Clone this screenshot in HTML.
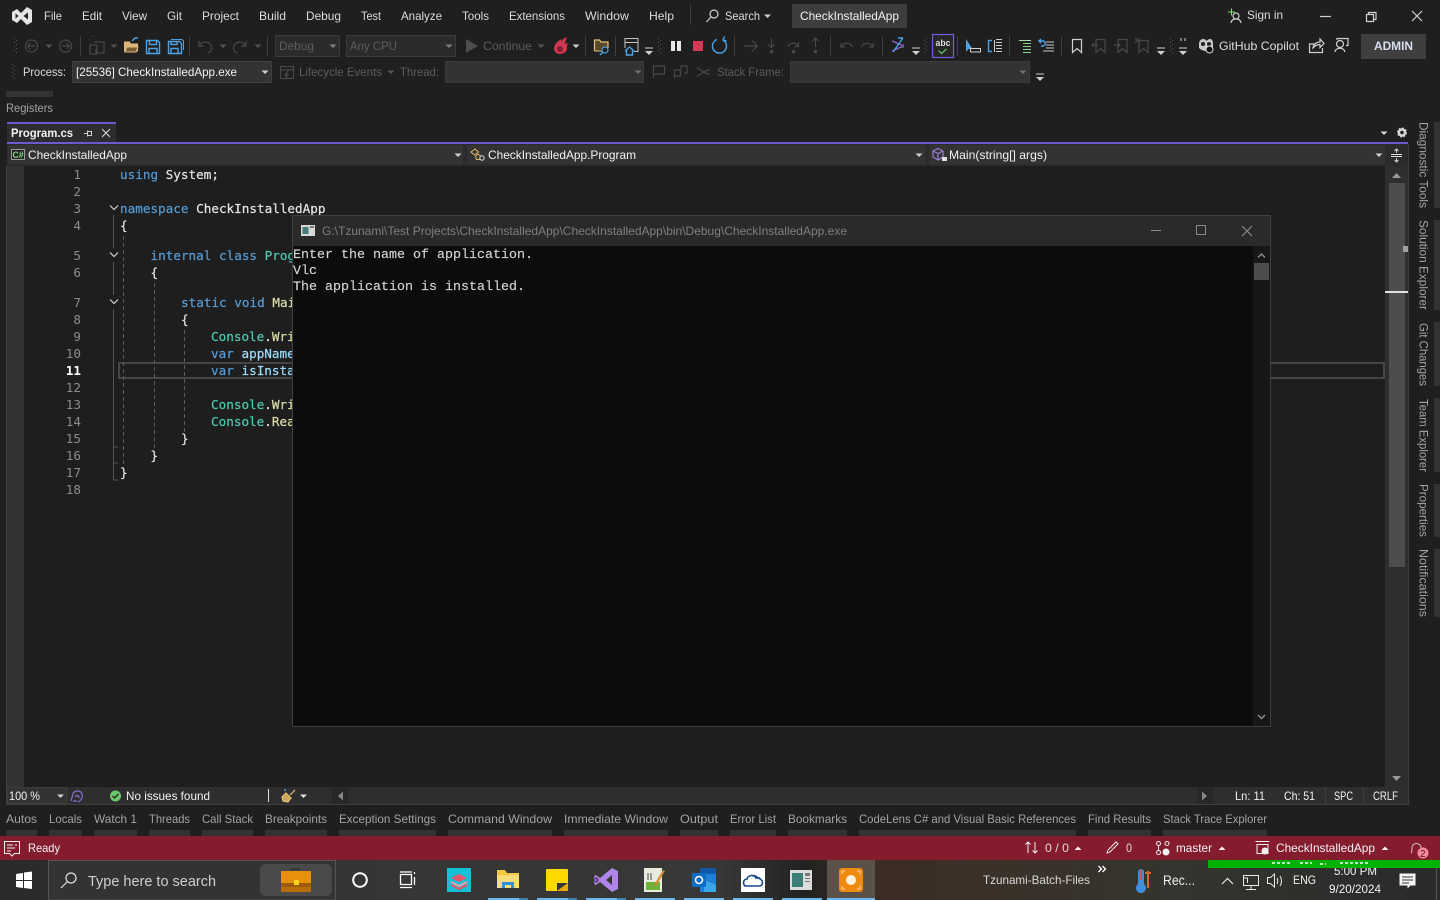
<!DOCTYPE html>
<html><head><meta charset="utf-8"><title>CheckInstalledApp</title>
<style>
html,body{margin:0;padding:0;background:#1f1f1f;width:1440px;height:900px;overflow:hidden}
svg{display:block;position:absolute;left:0;top:0}
text{font-family:"Liberation Sans",sans-serif;font-size:12px;fill:#dcdcdc;white-space:pre}
.m{fill:#dcdcdc}
.d{fill:#5c5c5c}
.g{fill:#a3a3a3}
.w{fill:#f2f2f2}
.c{font-family:"DejaVu Sans Mono",monospace;font-size:12.65px;fill:#e4e4e4;stroke:#e4e4e4;stroke-width:.2px}
.k{fill:#569cd6;stroke:#569cd6}.t{fill:#4ec9b0;stroke:#4ec9b0}.y{fill:#dcdcaa;stroke:#dcdcaa}.v{fill:#9cdcfe;stroke:#9cdcfe}
.n{font-family:"DejaVu Sans Mono",monospace;font-size:12.65px;fill:#8c8c8c;text-anchor:end}
.con{font-family:"Liberation Mono",monospace;font-size:13.33px;fill:#d4d4d4;stroke:#d4d4d4;stroke-width:.15px}
.s{fill:none;stroke:#d0d0d0;stroke-width:1.2}
.ds{fill:none;stroke:#484848;stroke-width:1.2}
.b{fill:none;stroke:#4aa3e8;stroke-width:1.4}
.sep{stroke:#3f3f3f;stroke-width:1}
.sg{stroke:#555;stroke-width:1;fill:none}
.dash{stroke:#5a5a5a;stroke-width:1;stroke-dasharray:4 3;fill:none}
</style></head><body>
<svg width="1440" height="900" viewBox="0 0 1440 900" xmlns="http://www.w3.org/2000/svg">
<defs>
<linearGradient id="tb" x1="0" x2="1" y1="0" y2="0">
<stop offset="0" stop-color="#2c2a29"/><stop offset=".24" stop-color="#353534"/><stop offset=".5" stop-color="#383836"/><stop offset=".56" stop-color="#222220"/><stop offset=".6" stop-color="#3c2c25"/><stop offset=".7" stop-color="#3a3129"/><stop offset=".82" stop-color="#33352e"/><stop offset="1" stop-color="#2a2a2a"/>
</linearGradient>
<g id="car"><path d="M-3.5 -1.5h7l-3.5 3.5z"/></g>
<g id="ovf"><path d="M-4 -4h8" stroke="#d0d0d0" fill="none"/><path d="M-4 -1h8l-4 4z" fill="#d0d0d0"/></g>
<pattern id="grip" width="4" height="4" patternUnits="userSpaceOnUse"><rect width="1" height="1" fill="#555"/><rect x="2" y="2" width="1" height="1" fill="#555"/></pattern>
</defs>
<rect width="1440" height="900" fill="#1f1f1f"/>

<!-- title bar -->
<path d="M12 12l5-3 4 4 6-6 5 3v12l-5 3-6-6-4 4-5-3z" fill="#e4e4e4"/>
<path d="M15.500 13.500l3 2.500-3 2.500zM28 12.500v7l-4.500-3.500z" fill="#1f1f1f"/>
<text x="44" y="20" textLength="18" lengthAdjust="spacingAndGlyphs">File</text>
<text x="82" y="20" textLength="20" lengthAdjust="spacingAndGlyphs">Edit</text>
<text x="122" y="20" textLength="25" lengthAdjust="spacingAndGlyphs">View</text>
<text x="167" y="20" textLength="15" lengthAdjust="spacingAndGlyphs">Git</text>
<text x="202" y="20" textLength="37" lengthAdjust="spacingAndGlyphs">Project</text>
<text x="259" y="20" textLength="27" lengthAdjust="spacingAndGlyphs">Build</text>
<text x="306" y="20" textLength="35" lengthAdjust="spacingAndGlyphs">Debug</text>
<text x="361" y="20" textLength="20" lengthAdjust="spacingAndGlyphs">Test</text>
<text x="401" y="20" textLength="41" lengthAdjust="spacingAndGlyphs">Analyze</text>
<text x="462" y="20" textLength="27" lengthAdjust="spacingAndGlyphs">Tools</text>
<text x="509" y="20" textLength="56" lengthAdjust="spacingAndGlyphs">Extensions</text>
<text x="585" y="20" textLength="44" lengthAdjust="spacingAndGlyphs">Window</text>
<text x="649" y="20" textLength="25" lengthAdjust="spacingAndGlyphs">Help</text>
<line x1="690.500" y1="5" x2="690.500" y2="25" class="sep"/>
<circle cx="714" cy="14" r="4" class="s"/><path d="M711 17l-4.500 5" class="s"/>
<text x="725" y="20" textLength="35" lengthAdjust="spacingAndGlyphs">Search</text>
<use href="#car" x="767.500" y="16" fill="#d0d0d0"/>
<rect x="792" y="4" width="115" height="24" fill="#3d3d3d"/>
<text x="800" y="20" textLength="99" lengthAdjust="spacingAndGlyphs" class="w">CheckInstalledApp</text>
<path d="M1228 12h7M1231.500 8.500v7" stroke="#7de07d" stroke-width="1.100" fill="none"/>
<circle cx="1236" cy="16" r="3" class="s"/><path d="M1231 23c.5-5.500 9.500-5.500 10 0" class="s"/>
<text x="1247" y="19" textLength="36" lengthAdjust="spacingAndGlyphs">Sign in</text>
<path d="M1320 16.500h11" class="s"/>
<path d="M1366.500 14.500h7v7h-7zM1368.500 14v-1.500h7.500v7h-2" class="s"/>
<path d="M1412 11l10 10M1422 11l-10 10" class="s"/>

<!-- toolbar row 1 -->
<rect x="13" y="37" width="4" height="17" fill="url(#grip)"/>
<circle cx="31.500" cy="46" r="6" class="ds"/><path d="M35 46h-7M30.500 43l-3 3 3 3" class="ds"/>
<use href="#car" x="49" y="46" fill="#555"/>
<circle cx="65.500" cy="46" r="6" class="ds"/><path d="M62 46h7M66.500 43l3 3-3 3" class="ds"/>
<line x1="80.500" y1="36" x2="80.500" y2="56" class="sep"/>
<path d="M94 42h10v11h-8v-4M90 40h-1M93 37v-1" class="ds"/><rect x="90" y="45" width="7" height="9" class="ds"/>
<use href="#car" x="114" y="46" fill="#555"/>
<path d="M124.500 51v-9h5l1 2h7v7z" fill="#dcb67a" stroke="#dcb67a"/><path d="M125 52l2-5h11l-2 5z" fill="#7a5f35" stroke="#dcb67a"/><path d="M132 41l3-3h3" class="b"/>
<path d="M146.500 40.500h11l2 2v11h-13zM149.500 40.500v4h7v-4M149 53.500v-5h8v5" class="b"/>
<path d="M168.500 41.500h11l2 2v10h-13zM171 41.500v3h6v-3M171 53.500v-5h7v5" class="b"/><path d="M171 39.500h11l1.500 1.500v9" stroke="#4aa3e8" fill="none"/>
<line x1="189.500" y1="36" x2="189.500" y2="56" class="sep"/>
<path d="M199 41v5h5M199.500 46c2-6 12-5 12 2 0 3-2 5-4 5" class="ds"/>
<use href="#car" x="223" y="46" fill="#555"/>
<path d="M246 41v5h-5M245.500 46c-2-6-12-5-12 2 0 3 2 5 4 5" class="ds"/>
<use href="#car" x="258" y="46" fill="#555"/>
<line x1="267.500" y1="36" x2="267.500" y2="56" class="sep"/>
<rect x="275.500" y="35.500" width="64" height="21" fill="#2b2b2b" stroke="#3a3a3a"/>
<text x="279" y="50" textLength="35" lengthAdjust="spacingAndGlyphs" class="d">Debug</text>
<use href="#car" x="333" y="46" fill="#808080"/>
<rect x="346.500" y="35.500" width="109" height="21" fill="#2b2b2b" stroke="#3a3a3a"/>
<text x="350" y="50" textLength="47" lengthAdjust="spacingAndGlyphs" class="d">Any CPU</text>
<use href="#car" x="449" y="46" fill="#808080"/>
<path d="M466 39l12 7-12 7z" fill="#4d4d4d"/>
<text x="483" y="50" textLength="49" lengthAdjust="spacingAndGlyphs" class="d">Continue</text>
<use href="#car" x="541" y="46" fill="#555"/>
<path d="M567 37c-3 1-5 3-6 5 0-1 0-2 1-3-5 2-8 6-8 10 0 3 3 5 6 5s7-2 7-6c0-2 0-3 1-5-1 0-2 1-3 1 0-2 1-5 2-7z" fill="#d0384f"/><circle cx="560" cy="49" r="3" fill="#7a2030"/>
<use href="#car" x="576" y="46" fill="#d0d0d0"/>
<line x1="585.500" y1="36" x2="585.500" y2="56" class="sep"/>
<path d="M594.500 51v-11h5l1.500 2h7v6" fill="#5a4a2a" stroke="#e5c07b" stroke-width="1.200"/><path d="M594.500 51h8" stroke="#e5c07b"/><circle cx="605" cy="50" r="3" fill="#1f1f1f" stroke="#4aa3e8" stroke-width="1.200"/><path d="M603 52l-3 3" class="b"/>
<line x1="615.500" y1="36" x2="615.500" y2="56" class="sep"/>
<path d="M625 48v-9.500h13v13h-4M625 42.500h13" stroke="#c4c4c4" fill="none"/><path d="M625 51l4.500-4 4.500 4M626.500 50v5h6v-5" class="b"/>
<use href="#ovf" x="649" y="52"/>
<rect x="658" y="37" width="4" height="17" fill="url(#grip)"/>
<rect x="671" y="41" width="4" height="10" fill="#e6e6e6"/><rect x="677" y="41" width="4" height="10" fill="#e6e6e6"/>
<rect x="693" y="41" width="10" height="10" fill="#d13a55"/>
<path d="M717 39.500a7 7 0 1 0 6 .5M724.500 36.500l-1.500 3.500 3.500 1" class="b"/>
<line x1="734.500" y1="36" x2="734.500" y2="56" class="sep"/>
<path d="M744 46h13M752 40.500l5.500 5.500-5.500 5.500" class="ds"/>
<path d="M771.500 38v9M768 44l3.500 3.500 3.500-3.500" class="ds"/><circle cx="771.500" cy="51.500" r="1.800" fill="#484848"/>
<path d="M788 47c1-5 9-5 10-1M798.500 42v4.500h-4.500" class="ds"/><circle cx="793.500" cy="51.500" r="1.800" fill="#484848"/>
<path d="M815.500 47v-9M812 41.500l3.500-3.500 3.500 3.500" class="ds"/><circle cx="815.500" cy="51.500" r="1.800" fill="#484848"/>
<line x1="830.500" y1="36" x2="830.500" y2="56" class="sep"/>
<path d="M841 43v4h4M841.500 47c2-5 9-5 11 0" class="ds"/>
<path d="M873 43v4h-4M872.500 47c-2-5-9-5-11 0" class="ds"/>
<line x1="882.500" y1="36" x2="882.500" y2="56" class="sep"/>
<path d="M892 41c4 1 8 5 12 4M892 51c4-1 8-5 12-4" stroke="#8a6fd6" stroke-width="1.300" fill="none"/><path d="M893 52l10-14M898 38l5 0" class="b"/>
<use href="#ovf" x="916" y="52"/>
<rect x="924" y="37" width="4" height="17" fill="url(#grip)"/>
<rect x="932.500" y="34.500" width="21" height="23" fill="#262626" stroke="#6f5ee0" stroke-width="1.200"/>
<text x="935.500" y="46" textLength="15" lengthAdjust="spacingAndGlyphs" style="font-size:9.500px;font-weight:bold">abc</text>
<path d="M938.500 50.500l3 3 5-4.500" stroke="#5fc26a" stroke-width="1.200" fill="none"/>
<line x1="957.500" y1="36" x2="957.500" y2="56" class="sep"/>
<path d="M966 39v13l2.500-3h4z" fill="#4aa3e8"/><rect x="970.500" y="48.500" width="10" height="3.500" fill="#1f1f1f" stroke="#d0d0d0"/>
<path d="M992 40.500h-3.500v11H992" class="b"/><path d="M994.500 40v12M996 39.500h6M996 42.500h6M996 45.500h6M996 48.500h6M996 51.500h6" stroke="#d0d0d0" fill="none"/>
<line x1="1009.500" y1="36" x2="1009.500" y2="56" class="sep"/>
<path d="M1019 40.500h12" stroke="#a8dca8"/><path d="M1023 43.500h8M1023 46.500h8M1023 49.500h8M1023 52.500h8" stroke="#8fd08f"/>
<path d="M1041 39l-2 2 2 2M1039 41h4c3 0 3 5 0 5h-2" class="b"/><path d="M1046 42h8M1046 45h8M1046 48h8M1043 51h11" stroke="#c8c8c8" fill="none"/>
<line x1="1061.500" y1="36" x2="1061.500" y2="56" class="sep"/>
<path d="M1072.500 39.500h9v13l-4.500-4-4.500 4z" class="s" stroke-width="1.400"/>
<path d="M1096 39.500h9v13l-4.500-4-4.500 4zM1098 45h-6M1094 43l-2 2 2 2" class="ds"/>
<path d="M1118 39.500h9v13l-4.500-4-4.500 4zM1114 45h6M1118 43l2 2-2 2" class="ds"/>
<path d="M1139 40.500h9v12l-4.500-4-4.500 4zM1135 38l5 5M1140 38l-5 5" class="ds"/>
<use href="#ovf" x="1161" y="52"/>
<rect x="1169" y="37" width="4" height="17" fill="url(#grip)"/>
<path d="M1181 38v3M1185 38v3" stroke="#d0d0d0"/>
<use href="#ovf" x="1183" y="52"/>
<path d="M1199 44c0-3 2-5 4-5s3 1 3.500 2c1-1 2-2 3.500-2 2 0 3 2 3 5v4c-2 2-5 3-7 3s-5-1-7-3z" fill="#c8c8c8"/><circle cx="1203" cy="44" r="2" fill="#1f1f1f"/><circle cx="1209" cy="44" r="2" fill="#1f1f1f"/><circle cx="1209.500" cy="49.500" r="3.500" fill="#111" stroke="#ddd"/>
<text x="1219" y="50" textLength="80" lengthAdjust="spacingAndGlyphs">GitHub Copilot</text>
<path d="M1315 44h-5.500v8.500h13V48M1313 48c0-3 3-6 7-6v-3l4 4.500-4 4v-3c-3 0-5 1-7 3.500z" class="s" stroke-width="1"/>
<circle cx="1340" cy="44" r="3.500" class="s" stroke-width="1"/><path d="M1335 52c.5-5 9-5 10 0M1337 40v-1.500h11v7h-2" class="s" stroke-width="1"/>
<rect x="1361" y="34" width="65" height="25" fill="#3f3f3f"/>
<text x="1374" y="50" textLength="39" lengthAdjust="spacingAndGlyphs" style="font-weight:bold;fill:#d6dfee">ADMIN</text>

<!-- toolbar row 2 -->
<rect x="12" y="63" width="4" height="17" fill="url(#grip)"/>
<text x="23" y="76" textLength="43" lengthAdjust="spacingAndGlyphs">Process:</text>
<rect x="72.500" y="61.500" width="199" height="21" fill="#333" stroke="#3f3f3f"/>
<text x="76" y="76" textLength="161" lengthAdjust="spacingAndGlyphs" class="w">[25536] CheckInstalledApp.exe</text>
<use href="#car" x="265" y="72" fill="#d0d0d0"/>
<path d="M280.500 66.500h13v12h-13zM280.500 70h13M288 71l-3 4h3l-2 3" class="ds"/>
<text x="299" y="76" textLength="83" lengthAdjust="spacingAndGlyphs" class="d">Lifecycle Events</text>
<use href="#car" x="391" y="72" fill="#555"/>
<text x="400" y="76" textLength="39" lengthAdjust="spacingAndGlyphs" class="d">Thread:</text>
<rect x="445.500" y="61.500" width="198" height="21" fill="#333" stroke="#3a3a3a"/>
<use href="#car" x="638" y="72" fill="#707070"/>
<path d="M653.500 78V66h11v8h-11" class="ds"/>
<path d="M674.500 78v-8h6v6h-6M681 69v-3h6v7h-3" class="ds"/>
<path d="M697 68c4 1 9 7 13 6M697 76c4-1 9-7 13-6" class="ds"/>
<text x="717" y="76" textLength="67" lengthAdjust="spacingAndGlyphs" class="d">Stack Frame:</text>
<rect x="790.500" y="61.500" width="239" height="21" fill="#333" stroke="#3a3a3a"/>
<use href="#car" x="1023" y="72" fill="#707070"/>
<use href="#ovf" x="1040" y="78"/>

<!-- registers -->
<rect x="6" y="91" width="47" height="6" fill="#333"/>
<text x="6" y="112" textLength="47" lengthAdjust="spacingAndGlyphs" class="g">Registers</text>

<!-- tab -->
<rect x="7" y="122" width="109" height="20" fill="#2d2d2d"/>
<rect x="7" y="122" width="109" height="2" fill="#6a5ad2"/>
<text x="11" y="137" textLength="62" lengthAdjust="spacingAndGlyphs" style="font-weight:bold;fill:#f2f2f2">Program.cs</text>
<path d="M84 133.500h3.500M87.500 130.500v6M87.500 131.500h4v4h-4" stroke="#d0d0d0" fill="none"/>
<path d="M102 129l8 8M110 129l-8 8" class="s" stroke-width="1.400"/>
<rect x="7" y="142" width="1401" height="2" fill="#6a5ad2"/>
<use href="#car" x="1384" y="133" fill="#d8d8d8"/>
<circle cx="1402" cy="132.500" r="3" fill="none" stroke="#d8d8d8" stroke-width="2.500"/><circle cx="1402" cy="132.500" r="4.500" fill="none" stroke="#d8d8d8" stroke-width="1" stroke-dasharray="2 1.500"/>

<!-- nav bar -->
<rect x="7" y="144" width="1401" height="22" fill="#2b2b2b"/>
<rect x="8" y="145" width="455" height="19" fill="#333"/>
<rect x="468" y="145" width="457" height="19" fill="#333"/>
<rect x="929" y="145" width="456" height="19" fill="#333"/>
<rect x="1386" y="145" width="22" height="19" fill="#2b2b2b"/>
<rect x="11.500" y="149.500" width="13" height="10" fill="#222" stroke="#9a9a9a"/>
<text x="12.500" y="158" textLength="11" lengthAdjust="spacingAndGlyphs" style="font-size:9.500px;font-weight:bold;fill:#86dc86">C#</text>
<text x="28" y="159" textLength="99" lengthAdjust="spacingAndGlyphs" class="w">CheckInstalledApp</text>
<use href="#car" x="458" y="155" fill="#d0d0d0"/>
<path d="M471 152l4-3 3.500 3-4 3zM478 154l3 2.500-1 3h-3.500l-1-3z" stroke="#e0b96a" fill="none"/><circle cx="482" cy="158" r="2.200" fill="#333" stroke="#ddd"/>
<text x="488" y="159" textLength="148" lengthAdjust="spacingAndGlyphs" class="w">CheckInstalledApp.Program</text>
<use href="#car" x="919" y="155" fill="#d0d0d0"/>
<path d="M933 151l5-2.500 5 2.500v6l-5 3-5-3zM933 151l5 2.500 5-2.500M938 153.500v6" stroke="#9b7fd6" fill="none" stroke-width="1.200"/><rect x="942" y="157" width="5" height="4" fill="#e0e0e0"/>
<text x="949" y="159" textLength="98" lengthAdjust="spacingAndGlyphs" class="w">Main(string[] args)</text>
<use href="#car" x="1379" y="155" fill="#d0d0d0"/>
<path d="M1391 154.500h11M1391 156.500h11" stroke="#e0e0e0"/><path d="M1396.500 149v4M1396.500 158v4M1394.500 151l2-2 2 2M1394.500 160l2 2 2-2" stroke="#d0d0d0" fill="none"/>

<!-- editor frame -->
<rect x="6" y="166" width="1" height="639" fill="#3f3f3f"/>
<rect x="7" y="166" width="17" height="621" fill="#333"/>
<rect x="24" y="166" width="1361" height="621" fill="#1e1e1e"/>
<rect x="1385" y="166" width="23" height="621" fill="#2e2e2e"/>
<rect x="1408" y="144" width="1" height="661" fill="#3f3f3f"/>
<path d="M1392 178l4.500-5 4.500 5z" fill="#999"/>
<rect x="1389" y="183" width="16" height="384" fill="#4d4d4d"/>
<rect x="1403" y="246" width="5" height="6" fill="#a0a0a0"/>
<rect x="1385" y="291" width="23" height="2" fill="#e0e0e0"/>
<path d="M1392 776l4.500 5 4.500-5z" fill="#999"/>

<!-- current line -->
<rect x="119" y="363" width="1265" height="15" fill="none" stroke="#464646" stroke-width="2"/>

<!-- outline -->
<path d="M113.500 215v33M113.500 262v33M113.500 309v171M113.500 447h5M113.500 463h5M113.500 480h5" class="sg"/>
<path d="M110 205.500l4 4 4-4M110 252.500l4 4 4-4M110 299.500l4 4 4-4" class="s" stroke-width="1"/>
<path d="M123.500 236v236M154.500 283v172M184.500 330v108" class="dash"/>

<g transform="translate(0,1)">
<!-- line numbers -->
<text class="n" x="81" y="178">1</text>
<text class="n" x="81" y="195">2</text>
<text class="n" x="81" y="212">3</text>
<text class="n" x="81" y="229">4</text>
<text class="n" x="81" y="259">5</text>
<text class="n" x="81" y="276">6</text>
<text class="n" x="81" y="306">7</text>
<text class="n" x="81" y="323">8</text>
<text class="n" x="81" y="340">9</text>
<text class="n" x="81" y="357">10</text>
<text class="n" x="81" y="374" style="fill:#fff;font-weight:bold">11</text>
<text class="n" x="81" y="391">12</text>
<text class="n" x="81" y="408">13</text>
<text class="n" x="81" y="425">14</text>
<text class="n" x="81" y="442">15</text>
<text class="n" x="81" y="459">16</text>
<text class="n" x="81" y="476">17</text>
<text class="n" x="81" y="493">18</text>

<!-- code -->
<text class="c" x="120" y="178"><tspan class="k">using</tspan> System;</text>
<text class="c" x="120" y="212"><tspan class="k">namespace</tspan> CheckInstalledApp</text>
<text class="c" x="120" y="229">{</text>
<text class="c" x="150.500" y="259"><tspan class="k">internal class</tspan> <tspan class="t">Program</tspan></text>
<text class="c" x="150.500" y="276">{</text>
<text class="c" x="181" y="306"><tspan class="k">static void</tspan> <tspan class="y">Main</tspan></text>
<text class="c" x="181" y="323">{</text>
<text class="c" x="211" y="340"><tspan class="t">Console</tspan>.<tspan class="y">WriteLine</tspan></text>
<text class="c" x="211" y="357"><tspan class="k">var</tspan> <tspan class="v">appName</tspan></text>
<text class="c" x="211" y="374"><tspan class="k">var</tspan> <tspan class="v">isInstalled</tspan></text>
<text class="c" x="211" y="408"><tspan class="t">Console</tspan>.<tspan class="y">WriteLine</tspan></text>
<text class="c" x="211" y="425"><tspan class="t">Console</tspan>.<tspan class="y">ReadLine</tspan></text>
<text class="c" x="181" y="442">}</text>
<text class="c" x="150.500" y="459">}</text>
<text class="c" x="120" y="476">}</text>
</g>

<!-- console window -->
<rect x="292.500" y="215.500" width="978" height="511" fill="#0c0c0c" stroke="#404040"/>
<rect x="293" y="216" width="977" height="30" fill="#2a2a2a"/>
<rect x="301" y="225" width="14" height="11" fill="#d8d8d8"/><rect x="302.500" y="227" width="6" height="7" fill="#4a7a7a"/><rect x="310" y="226" width="4" height="2" fill="#777"/>
<text x="322" y="235" textLength="525" lengthAdjust="spacingAndGlyphs" style="fill:#7f7f7f">G:\Tzunami\Test Projects\CheckInstalledApp\CheckInstalledApp\bin\Debug\CheckInstalledApp.exe</text>
<path d="M1151 230.500h10" stroke="#8a8a8a" fill="none"/>
<rect x="1196.500" y="225.500" width="9" height="9" fill="none" stroke="#8a8a8a"/>
<path d="M1242 226l10 10M1252 226l-10 10" stroke="#8a8a8a" stroke-width="1.200" fill="none"/>
<rect x="1253" y="246" width="17" height="480" fill="#171717"/>
<rect x="1254" y="263" width="15" height="17" fill="#4d4d4d"/>
<path d="M1258 257.500l3.500-3.500 3.500 3.500M1258 715l3.500 3.500 3.500-3.500" stroke="#8f8f8f" stroke-width="1.400" fill="none"/>
<text class="con" x="293" y="258">Enter the name of application.</text>
<text class="con" x="293" y="274">Vlc</text>
<text class="con" x="293" y="290">The application is installed.</text>

<!-- vertical side tabs -->
<g fill="#333"><rect x="1434" y="122" width="6" height="86"/><rect x="1434" y="220" width="6" height="90"/><rect x="1434" y="322" width="6" height="64"/><rect x="1434" y="398" width="6" height="74"/><rect x="1434" y="484" width="6" height="53"/><rect x="1434" y="549" width="6" height="68"/></g>
<text transform="translate(1419.500,122) rotate(90)" textLength="86" lengthAdjust="spacingAndGlyphs" class="g" x="0" y="0">Diagnostic Tools</text>
<text transform="translate(1419.500,220) rotate(90)" textLength="90" lengthAdjust="spacingAndGlyphs" class="g" x="0" y="0">Solution Explorer</text>
<text transform="translate(1419.500,323) rotate(90)" textLength="63" lengthAdjust="spacingAndGlyphs" class="g" x="0" y="0">Git Changes</text>
<text transform="translate(1419.500,399) rotate(90)" textLength="73" lengthAdjust="spacingAndGlyphs" class="g" x="0" y="0">Team Explorer</text>
<text transform="translate(1419.500,484) rotate(90)" textLength="53" lengthAdjust="spacingAndGlyphs" class="g" x="0" y="0">Properties</text>
<text transform="translate(1419.500,549) rotate(90)" textLength="68" lengthAdjust="spacingAndGlyphs" class="g" x="0" y="0">Notifications</text>

<!-- editor status row -->
<rect x="7" y="787" width="1401" height="17" fill="#2e2e2e"/>
<rect x="6" y="804" width="1403" height="1" fill="#3f3f3f"/>
<rect x="7.500" y="787.500" width="59" height="16" fill="#333" stroke="#3c3c3c"/>
<text x="9" y="800" textLength="31" lengthAdjust="spacingAndGlyphs" class="w">100 %</text>
<use href="#car" x="60.500" y="796" fill="#d0d0d0"/>
<path d="M71 801l2-7c1-4 8-4 9 0 1 3-1 7-4 8M75 797c1-2 4-2 4 1M73 801h4" stroke="#8a6fd6" fill="none" stroke-width="1.200"/>
<circle cx="115.500" cy="796" r="5.500" fill="#6cc76c"/><path d="M112.500 796l2 2 4-4" stroke="#1f1f1f" stroke-width="1.300" fill="none"/>
<text x="126" y="800" textLength="84" lengthAdjust="spacingAndGlyphs" class="w">No issues found</text>
<rect x="268" y="789" width="1" height="13" fill="#ddd"/>
<path d="M295 790l-5 5M286 793l5 5-3 4-5-1-1-4z" stroke="#e5c07b" fill="#c9a65a" stroke-width="1.200"/><circle cx="285" cy="790" r="1" fill="#4aa3e8"/>
<use href="#car" x="303.500" y="796" fill="#e0e0e0"/>
<rect x="332" y="787" width="16" height="17" fill="#272727"/>
<path d="M343 791.500v9l-5-4.500z" fill="#888"/>
<rect x="1197" y="787" width="16" height="17" fill="#272727"/>
<path d="M1202 791.500v9l5-4.500z" fill="#888"/>
<text x="1235" y="800" textLength="30" lengthAdjust="spacingAndGlyphs" class="w">Ln: 11</text>
<text x="1284" y="800" textLength="31" lengthAdjust="spacingAndGlyphs" class="w">Ch: 51</text>
<rect x="1325" y="787" width="1" height="17" fill="#3f3f3f"/><rect x="1363" y="787" width="1" height="17" fill="#3f3f3f"/>
<text x="1334" y="800" textLength="19" lengthAdjust="spacingAndGlyphs" class="w">SPC</text>
<text x="1373" y="800" textLength="25" lengthAdjust="spacingAndGlyphs" class="w">CRLF</text>

<!-- bottom tabs -->
<g fill="#333">
<rect x="6" y="830" width="31" height="6"/><rect x="49" y="830" width="33" height="6"/><rect x="94" y="830" width="43" height="6"/><rect x="149" y="830" width="41" height="6"/><rect x="202" y="830" width="51" height="6"/><rect x="265" y="830" width="62" height="6"/><rect x="339" y="830" width="97" height="6"/><rect x="448" y="830" width="104" height="6"/><rect x="564" y="830" width="104" height="6"/><rect x="680" y="830" width="38" height="6"/><rect x="730" y="830" width="46" height="6"/><rect x="788" y="830" width="59" height="6"/><rect x="859" y="830" width="217" height="6"/><rect x="1088" y="830" width="63" height="6"/><rect x="1163" y="830" width="104" height="6"/>
</g>
<text x="6" y="823" textLength="31" lengthAdjust="spacingAndGlyphs" class="g">Autos</text>
<text x="49" y="823" textLength="33" lengthAdjust="spacingAndGlyphs" class="g">Locals</text>
<text x="94" y="823" textLength="43" lengthAdjust="spacingAndGlyphs" class="g">Watch 1</text>
<text x="149" y="823" textLength="41" lengthAdjust="spacingAndGlyphs" class="g">Threads</text>
<text x="202" y="823" textLength="51" lengthAdjust="spacingAndGlyphs" class="g">Call Stack</text>
<text x="265" y="823" textLength="62" lengthAdjust="spacingAndGlyphs" class="g">Breakpoints</text>
<text x="339" y="823" textLength="97" lengthAdjust="spacingAndGlyphs" class="g">Exception Settings</text>
<text x="448" y="823" textLength="104" lengthAdjust="spacingAndGlyphs" class="g">Command Window</text>
<text x="564" y="823" textLength="104" lengthAdjust="spacingAndGlyphs" class="g">Immediate Window</text>
<text x="680" y="823" textLength="38" lengthAdjust="spacingAndGlyphs" class="g">Output</text>
<text x="730" y="823" textLength="46" lengthAdjust="spacingAndGlyphs" class="g">Error List</text>
<text x="788" y="823" textLength="59" lengthAdjust="spacingAndGlyphs" class="g">Bookmarks</text>
<text x="859" y="823" textLength="217" lengthAdjust="spacingAndGlyphs" class="g">CodeLens C# and Visual Basic References</text>
<text x="1088" y="823" textLength="63" lengthAdjust="spacingAndGlyphs" class="g">Find Results</text>
<text x="1163" y="823" textLength="104" lengthAdjust="spacingAndGlyphs" class="g">Stack Trace Explorer</text>

<!-- status bar -->
<rect x="0" y="836" width="1440" height="24" fill="#841c2e"/>
<path d="M4.500 841.500h15v12h-5l-2.500 2.500-2.500-2.500h-5z" fill="none" stroke="#f0f0f0"/><path d="M7 845h6M7 848h8M15 845h2M7 851h4" stroke="#f0f0f0" fill="none"/>
<text x="28" y="852" textLength="32" lengthAdjust="spacingAndGlyphs" class="w">Ready</text>
<path d="M1028 853v-11M1025.500 844.500l2.500-2.500 2.500 2.500M1035 842v11M1032.500 850.500l2.500 2.500 2.500-2.500" stroke="#f0f0f0" fill="none"/>
<text x="1045" y="852" textLength="24" lengthAdjust="spacingAndGlyphs" class="m">0 / 0</text>
<path d="M1074.500 850l3.500-3.500 3.500 3.500z" fill="#f0f0f0"/>
<path d="M1107 853l1-3 8-8 2 2-8 8z" fill="none" stroke="#f0f0f0"/>
<text x="1126" y="852" textLength="6" lengthAdjust="spacingAndGlyphs" class="m">0</text>
<circle cx="1158.500" cy="843.500" r="2" fill="none" stroke="#f0f0f0"/><circle cx="1167" cy="843.500" r="2" fill="none" stroke="#f0f0f0"/><circle cx="1158.500" cy="852.500" r="2" fill="none" stroke="#f0f0f0"/><path d="M1158.500 846v4" stroke="#f0f0f0"/><circle cx="1166" cy="852" r="3.500" fill="#f0f0f0"/>
<text x="1176" y="852" textLength="36" lengthAdjust="spacingAndGlyphs" class="w">master</text>
<path d="M1218.500 850l3.500-3.500 3.500 3.500z" fill="#f0f0f0"/>
<path d="M1255.500 841.500h14M1257 844.500h11v9h-11z" fill="none" stroke="#f0f0f0"/><circle cx="1265" cy="851" r="3.500" fill="#f0f0f0"/>
<text x="1276" y="852" textLength="99" lengthAdjust="spacingAndGlyphs" class="w">CheckInstalledApp</text>
<path d="M1381.500 850l3.500-3.500 3.500 3.500z" fill="#f0f0f0"/>
<path d="M1411 853c1-1 1-3 1-5 0-6 9-6 9 0" fill="none" stroke="#e0c0c0"/>
<circle cx="1423" cy="853" r="5.500" fill="#f28b9a"/>
<text x="1420" y="857" style="font-size:10px;fill:#5a1020">2</text>

<!-- taskbar -->
<rect x="0" y="860" width="1440" height="40" fill="url(#tb)"/>
<path d="M16 874l7-1v7h-7zM24 872.500l8-1v8.500h-8zM16 881h7v7l-7-1zM24 881h8v8l-8-1z" fill="#fff"/>
<rect x="48.500" y="860.500" width="287" height="39.500" fill="#333" stroke="#565656"/>
<circle cx="71" cy="878" r="5" fill="none" stroke="#e0e0e0" stroke-width="1.200"/><path d="M67 882l-6 6" stroke="#e0e0e0" stroke-width="1.200"/>
<text x="88" y="886" textLength="128" lengthAdjust="spacingAndGlyphs" style="font-size:15px;fill:#cfcfcf">Type here to search</text>
<rect x="260" y="864" width="72" height="32" rx="6" fill="#4a4a4a"/>
<path d="M292 872v-3h7v3" fill="none" stroke="#333" stroke-width="1.500"/>
<rect x="281" y="871" width="30" height="21" fill="#e88f0c"/><rect x="281" y="883" width="30" height="4" fill="#9c5b08"/><rect x="281" y="887" width="30" height="5" fill="#b86f08"/><rect x="294" y="880" width="5" height="5" fill="#f7d31a"/>
<circle cx="360" cy="880" r="6.800" fill="none" stroke="#fff" stroke-width="2"/>
<path d="M400.500 874.500h11v10h-11zM400 872h12M400 887.500h12M414.500 872v2M414.500 877v8" stroke="#fff" fill="none" stroke-width="1.300"/>
<rect x="447" y="868" width="24" height="24" fill="#14c0d6"/><path d="M451 878l8-4 8 4-8 4z" fill="#e8556a"/><path d="M451 882l8 4 8-4" fill="none" stroke="#f0a0a8" stroke-width="2"/><path d="M451 885l8 4 8-4" fill="none" stroke="#e8556a" stroke-width="2"/>
<path d="M497 870h8l2 3h12v15h-22z" fill="#f5c842"/><path d="M497 875h22v13h-22z" fill="#fbdc7a"/><rect x="502" y="882" width="12" height="6" fill="#2f8fd8"/><rect x="505" y="885" width="6" height="3" fill="#fbdc7a"/>
<rect x="546" y="869" width="22" height="22" rx="1" fill="#ffd800"/><path d="M557 891v-8h11z" fill="#333"/><path d="M557 891l11-8v8z" fill="#e8a80c"/>
<path d="M612 868l6 3v18l-6 3-12-10-4 3-2-1v-8l2-1 4 3z" fill="#b084e8"/><path d="M612 875v10l-6-5z" fill="#383838"/><path d="M596 876.500v7l3-3.500z" fill="#383838"/><path d="M594 876l4 4-4 4z" fill="#7d57c4"/>
<rect x="644" y="868" width="18" height="24" fill="#e8ecdf"/><rect x="646" y="882" width="14" height="8" fill="#6fb23a"/><path d="M648 873v7M651 873v7" stroke="#444"/><path d="M654 885l9-15 2 1-9 15z" fill="#d88a2a"/>
<rect x="700" y="868" width="16" height="24" fill="#1f7fd6"/><path d="M700 868h16v6h-16z" fill="#0f5aa8"/><path d="M704 880l12 5v7h-12z" fill="#38a6e8"/><rect x="692" y="873" width="14" height="14" fill="#0f6cc4"/><circle cx="699" cy="880" r="3.500" fill="none" stroke="#fff" stroke-width="1.500"/>
<rect x="741" y="868" width="24" height="24" fill="#fff"/><path d="M745 886c-3-3-1-7 2-7 1-4 7-5 9-1 2-1 4 0 4 1 3 1 4 7-1 7zM752 876c2-1 5 0 6 3" fill="none" stroke="#1a4a8a" stroke-width="1.600"/>
<rect x="790" y="870" width="22" height="20" fill="#dcdcdc"/><rect x="792" y="873" width="11" height="14" fill="#3f7d78"/><rect x="805" y="873" width="5" height="3" fill="#777"/><rect x="805" y="878" width="5" height="1" fill="#777"/><rect x="805" y="881" width="5" height="1" fill="#777"/>
<rect x="827" y="860" width="48" height="40" fill="#5a5248"/>
<rect x="839" y="868" width="24" height="24" rx="3" fill="#ef8a12"/><circle cx="851" cy="880" r="5" fill="#fff2df"/><path d="M842 874v-3h3M860 874v-3h-3M842 886v3h3M860 886v3h-3" stroke="#ffd9a8" fill="none"/>
<g fill="#6cb6f0"><rect x="488" y="898" width="31" height="2"/><rect x="537" y="898" width="31" height="2"/><rect x="586" y="898" width="31" height="2"/><rect x="635" y="898" width="40" height="2"/><rect x="684" y="898" width="40" height="2"/><rect x="733" y="898" width="40" height="2"/><rect x="782" y="898" width="40" height="2"/><rect x="827" y="898" width="48" height="2"/></g>
<g fill="#3f7fa8"><rect x="519" y="898" width="9" height="2"/><rect x="568" y="898" width="9" height="2"/><rect x="617" y="898" width="9" height="2"/></g>
<text x="983" y="884" textLength="107" lengthAdjust="spacingAndGlyphs" style="fill:#d8d8d8">Tzunami-Batch-Files</text>
<path d="M1098.500 866l3 3-3 3M1102.500 866l3 3-3 3" stroke="#fff" stroke-width="1.300" fill="none"/>
<path d="M1138 872a3 3 0 0 1 6 0v12a5 5 0 1 1-6 0z" fill="#3f8fe0"/><rect x="1140" y="870" width="2" height="10" fill="#d05050"/>
<path d="M1148 871v17M1145 873h6" stroke="#d06a30" stroke-width="2" fill="none"/>
<text x="1163" y="885" textLength="32" lengthAdjust="spacingAndGlyphs" style="font-size:14px;fill:#f0f0f0">Rec...</text>
<path d="M1222 884l5.500-5.500 5.500 5.500" stroke="#e8e8e8" stroke-width="1.200" fill="none"/>
<path d="M1243.500 875.500h15v10h-15zM1251 885.500v4M1246 889.500h10M1243.500 878h4v5" stroke="#e8e8e8" fill="none"/>
<path d="M1267.500 877.500h3l4-3.500v13l-4-3.500h-3zM1277 878c1 2 1 4 0 6M1280 876c2 3 2 7 0 10" stroke="#e8e8e8" fill="none"/>
<text x="1293" y="884" textLength="23" lengthAdjust="spacingAndGlyphs" class="w">ENG</text>
<text x="1334" y="875" textLength="43" lengthAdjust="spacingAndGlyphs" class="w">5:00 PM</text>
<text x="1329" y="893" textLength="52" lengthAdjust="spacingAndGlyphs" class="w">9/20/2024</text>
<path d="M1399.500 873.500h16v12h-5l-3 3v-3h-8z" fill="#f4f4f4"/><path d="M1402 877h11M1402 880h11M1402 883h7" stroke="#333"/>
<rect x="1436" y="860" width="1" height="40" fill="#555"/>
<rect x="1208" y="860" width="232" height="8" fill="#00b300"/>
<path d="M1272 863h20M1300 863h12M1320 864h6M1340 863h28" stroke="#bfe8bf" stroke-width="2" stroke-dasharray="3 2"/>
</svg>
</body></html>
